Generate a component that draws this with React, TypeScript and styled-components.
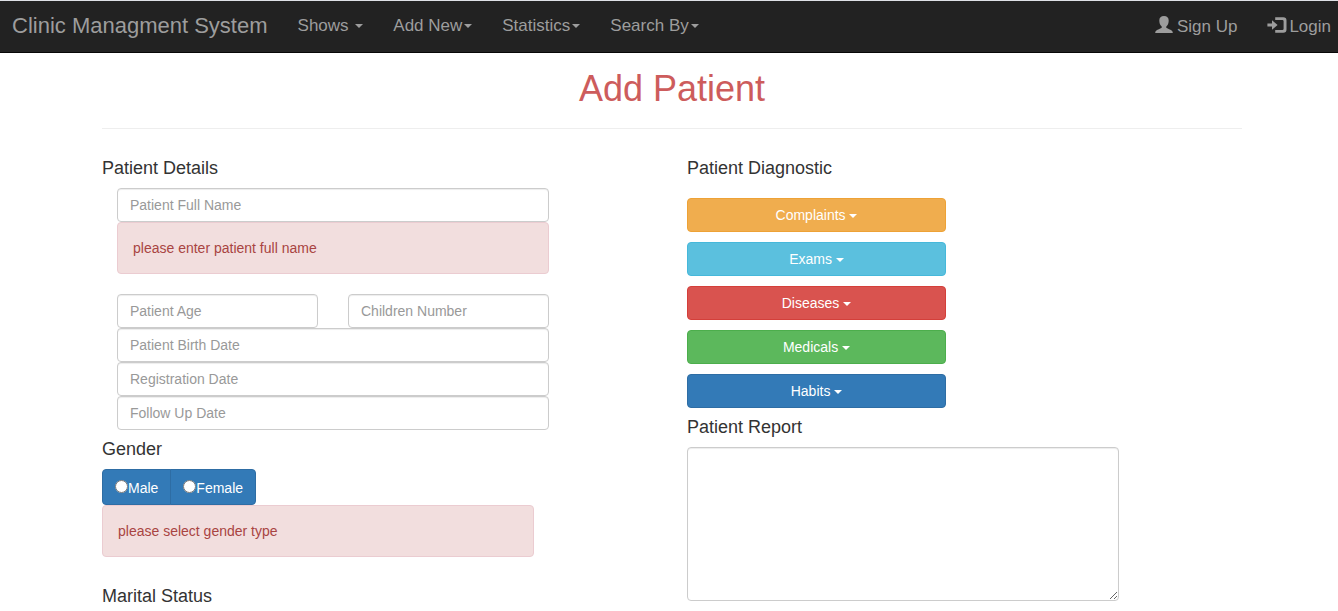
import React from "react";
import styled, { createGlobalStyle } from "styled-components";

const GlobalStyle = createGlobalStyle`
  *, *::before, *::after { box-sizing: border-box; }
  body {
    margin: 0;
    background: #fff;
    color: #333;
    font: 14px/20px "Liberation Sans", Arial, sans-serif;
  }
  button, input, textarea { font: inherit; }
`;

const Navbar = styled.nav`
  display: flex;
  justify-content: space-between;
  padding: 0 7px 0 12px;
  background: #222;
  border-top: 1px solid #dee1e6;
  border-bottom: 1px solid #080808;
`;

const NavGroup = styled.div`
  display: flex;
  align-items: center;
  gap: 30px;
  height: 51px;
`;

const MenuGroup = styled(NavGroup)`
  padding-bottom: 2px;
`;

const Brand = styled.a`
  color: #9d9d9d;
  font-size: 22px;
  line-height: 24px;
  text-decoration: none;
  white-space: nowrap;
`;

const NavButton = styled.button`
  padding: 0;
  border: 0;
  background: none;
  color: #9d9d9d;
  font-size: 17px;
  line-height: 20px;
  white-space: nowrap;
  cursor: pointer;
`;

const NavLink = styled.a<{ $gap: number }>`
  display: flex;
  align-items: center;
  gap: ${(p) => p.$gap}px;
  color: #9d9d9d;
  font-size: 17px;
  line-height: 20px;
  text-decoration: none;
  white-space: nowrap;
`;

const Icon = styled.svg`
  display: block;
  height: 18px;
  margin-bottom: 3px;
  fill: currentColor;
`;

const Caret = styled.span<{ $flush?: boolean }>`
  display: inline-block;
  margin-left: ${(p) => (p.$flush ? 0 : 2)}px;
  vertical-align: middle;
  border-top: 4px solid;
  border-right: 4px solid transparent;
  border-left: 4px solid transparent;
`;

const Container = styled.main`
  max-width: 1146px;
  margin: 0 auto;
  padding: 16px 0 4px 6px;
`;

const PageTitle = styled.h1`
  margin: 0;
  padding-bottom: 19px;
  border-bottom: 1px solid #eee;
  color: #cd5c5c;
  font-size: 36px;
  font-weight: 400;
  line-height: 40px;
  text-align: center;
`;

const Columns = styled.form`
  display: grid;
  grid-template-columns: 1fr 1fr;
  gap: 30px;
  padding-top: 20px;
`;

const Column = styled.section`
  min-width: 0;
`;

const Heading = styled.h4`
  margin: 0;
  padding: 10px 0;
  font-size: 18px;
  font-weight: 400;
  line-height: 19px;
`;

const Fields = styled.div`
  display: grid;
  grid-template-columns: 1fr 1fr;
  column-gap: 30px;
  max-width: 447px;
  padding-left: 15px;
`;

const TextField = styled.input<{ $half?: boolean }>`
  grid-column: ${(p) => (p.$half ? "auto" : "1 / -1")};
  width: 100%;
  min-width: 0;
  height: 34px;
  padding: 6px 12px;
  border: 1px solid #ccc;
  border-radius: 4px;
  background: #fff;
  box-shadow: inset 0 1px 1px rgba(0, 0, 0, 0.075);
  color: #555;
  &::placeholder { color: #999; opacity: 1; }
`;

const Alert = styled.div`
  grid-column: 1 / -1;
  max-width: 432px;
  margin-bottom: 20px;
  padding: 15px;
  border: 1px solid #ebccd1;
  border-radius: 4px;
  background: #f2dede;
  color: #a94442;
`;

const RadioGroup = styled.div`
  display: flex;
`;

const RadioLabel = styled.label`
  display: flex;
  align-items: flex-start;
  padding: 8px 12px 6px;
  border: 1px solid #2e6da4;
  background: #337ab7;
  color: #fff;
  cursor: pointer;
  &:first-child { border-radius: 4px 0 0 4px; }
  &:last-child { margin-left: -1px; border-radius: 0 4px 4px 0; }
`;

const Radio = styled.input`
  width: 13px;
  height: 13px;
  margin: 2px 0 0;
`;

const ButtonStack = styled.div`
  display: grid;
  gap: 10px;
  max-width: 259px;
  padding-top: 10px;
`;

const MenuButton = styled.button<{ $fill: string; $edge: string }>`
  height: 34px;
  padding: 6px 12px;
  border: 1px solid ${(p) => p.$edge};
  border-radius: 4px;
  background: ${(p) => p.$fill};
  color: #fff;
  cursor: pointer;
`;

const Report = styled.textarea`
  display: block;
  width: 100%;
  max-width: 432px;
  padding: 6px 12px;
  border: 1px solid #ccc;
  border-radius: 4px;
  box-shadow: inset 0 1px 1px rgba(0, 0, 0, 0.075);
  color: #555;
`;

const UserIcon = () => (
  <Icon width="18" viewBox="0 0 18 18" aria-hidden="true">
    <path d="M9 0C6 0 4.3 1.7 4.3 4.4C4.3 7 5.1 8.9 6.5 10.2C6.9 10.7 6.9 11.7 6.3 12.1C5 13 2.8 13.5 1.4 14.4C0.6 14.9 0.2 15.7 0.2 17H17.8C17.8 15.7 17.4 14.9 16.6 14.4C15.2 13.5 13 13 11.7 12.1C11.1 11.7 11.1 10.7 11.5 10.2C12.9 8.9 13.7 7 13.7 4.4C13.7 1.7 12 0 9 0Z" />
  </Icon>
);

const LoginIcon = () => (
  <Icon width="20" viewBox="0 0 20 18" aria-hidden="true">
    <path d="M0.4 7.4H5V4.3L10.6 9L5 13.7V10.6H0.4Z" />
    <path d="M8.2 1.2H16.2Q19.5 1.2 19.5 4.4V13.6Q19.5 16.8 16.2 16.8H8.2V14H15.4Q16.6 14 16.6 12.8V5.2Q16.6 4 15.4 4H8.2Z" />
  </Icon>
);

const diagnostics = [
  { label: "Complaints", fill: "#f0ad4e", edge: "#eea236" },
  { label: "Exams", fill: "#5bc0de", edge: "#46b8da" },
  { label: "Diseases", fill: "#d9534f", edge: "#d43f3a" },
  { label: "Medicals", fill: "#5cb85c", edge: "#4cae4c" },
  { label: "Habits", fill: "#337ab7", edge: "#2e6da4" },
];

export default function App() {
  return (
    <>
      <GlobalStyle />
      <Navbar>
        <MenuGroup>
          <Brand href="#">Clinic Managment System</Brand>
          <NavButton type="button">Shows <Caret /></NavButton>
          {["Add New", "Statistics", "Search By"].map((label) => (
            <NavButton key={label} type="button">{label}<Caret /></NavButton>
          ))}
        </MenuGroup>
        <NavGroup>
          <NavLink href="#signup" $gap={4}><UserIcon />Sign Up</NavLink>
          <NavLink href="#login" $gap={2}><LoginIcon />Login</NavLink>
        </NavGroup>
      </Navbar>
      <Container>
        <PageTitle>Add Patient</PageTitle>
        <Columns>
          <Column>
            <Heading>Patient Details</Heading>
            <Fields>
              <TextField placeholder="Patient Full Name" aria-label="Patient Full Name" />
              <Alert role="alert">please enter patient full name</Alert>
              <TextField $half placeholder="Patient Age" aria-label="Patient Age" />
              <TextField $half placeholder="Children Number" aria-label="Children Number" />
              <TextField placeholder="Patient Birth Date" aria-label="Patient Birth Date" />
              <TextField placeholder="Registration Date" aria-label="Registration Date" />
              <TextField placeholder="Follow Up Date" aria-label="Follow Up Date" />
            </Fields>
            <Heading id="gender">Gender</Heading>
            <RadioGroup role="radiogroup" aria-labelledby="gender">
              <RadioLabel><Radio type="radio" name="gender" value="male" />Male</RadioLabel>
              <RadioLabel><Radio type="radio" name="gender" value="female" />Female</RadioLabel>
            </RadioGroup>
            <Alert role="alert">please select gender type</Alert>
            <Heading>Marital Status</Heading>
          </Column>
          <Column>
            <Heading>Patient Diagnostic</Heading>
            <ButtonStack>
              {diagnostics.map(({ label, fill, edge }) => (
                <MenuButton key={label} type="button" $fill={fill} $edge={edge}>
                  {label} <Caret $flush />
                </MenuButton>
              ))}
            </ButtonStack>
            <Heading id="report">Patient Report</Heading>
            <Report rows={7} aria-labelledby="report" />
          </Column>
        </Columns>
      </Container>
    </>
  );
}
